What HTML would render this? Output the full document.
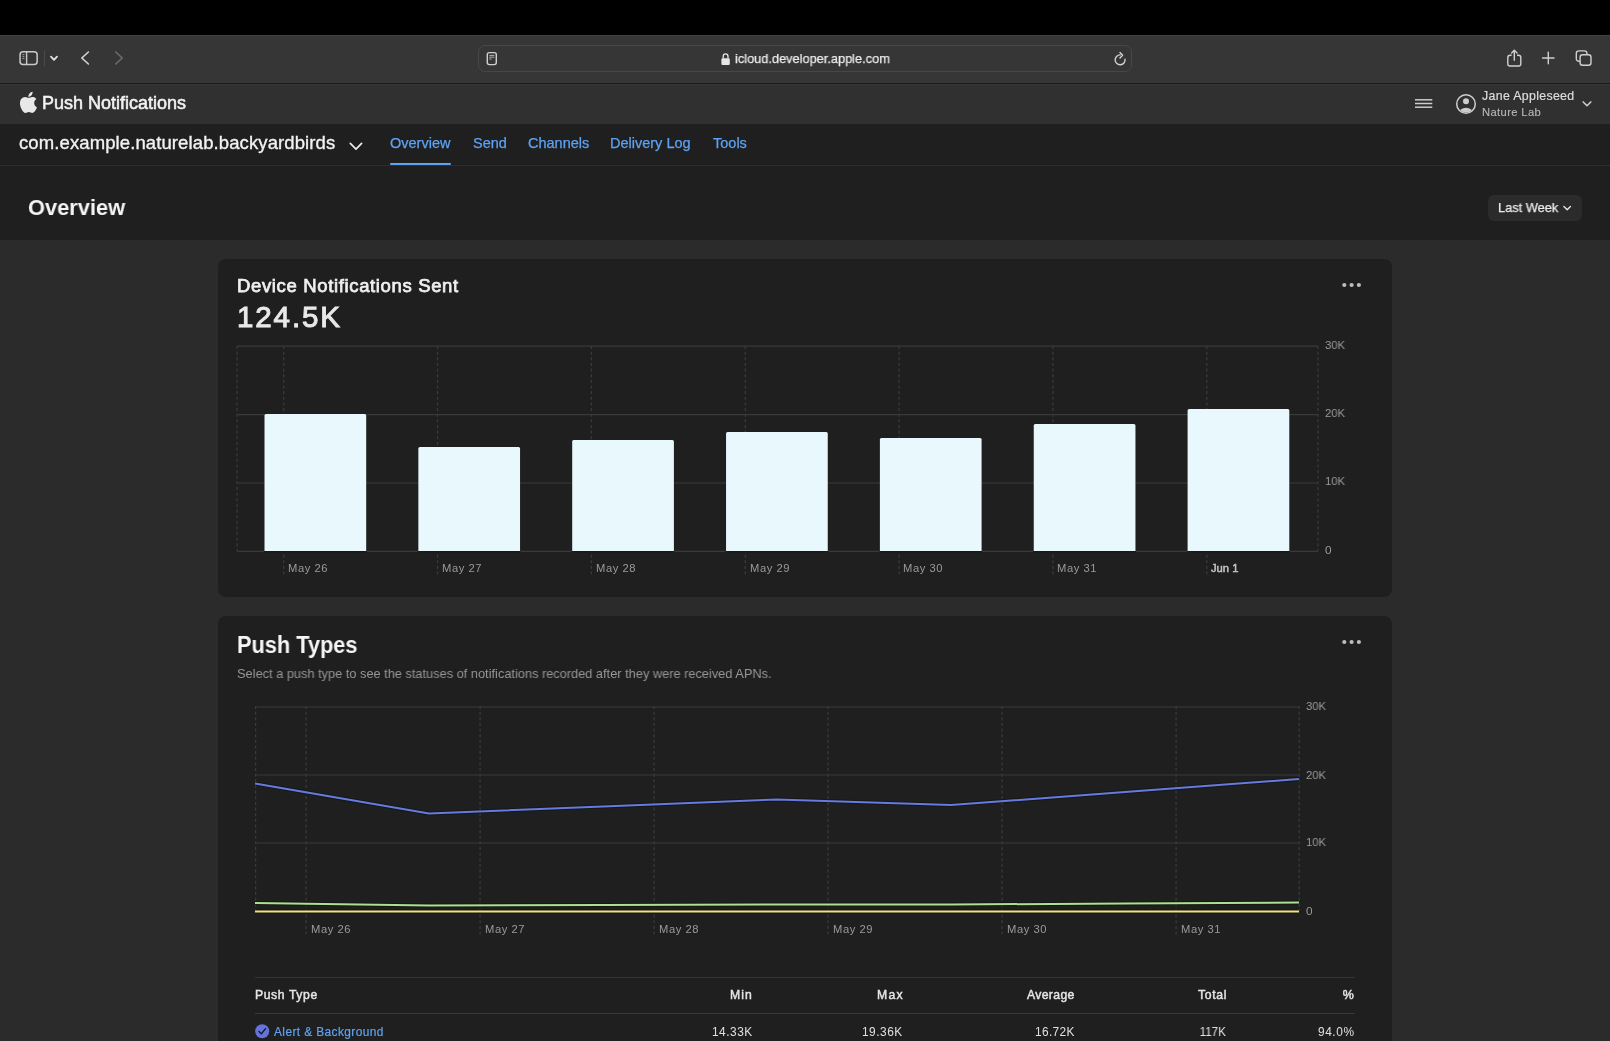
<!DOCTYPE html>
<html><head><meta charset="utf-8">
<style>
*{margin:0;padding:0;box-sizing:border-box}
html,body{width:1610px;height:1041px;overflow:hidden;background:#2b2b2b;font-family:"Liberation Sans",sans-serif;color:#fff}
.abs{position:absolute}
#topbar{left:0;top:0;width:1610px;height:35px;background:#000}
#toolbar{left:0;top:35px;width:1610px;height:49px;background:#363636;border-top:1px solid #424242;border-bottom:1px solid #1a1a1a}
#url{left:478px;top:45px;width:654px;height:27px;border-radius:7px;background:#363636;border:1.5px solid #474747}
#apphdr{left:0;top:84px;width:1610px;height:40px;background:#303030;border-top:1px solid #373737}
#subnav{left:0;top:124px;width:1610px;height:42px;background:#1f1f1f;border-bottom:1px solid #2e2e2e}
#ovhdr{left:0;top:166px;width:1610px;height:74px;background:#1f1f1f}
.card{position:absolute;left:218px;width:1174px;background:#1f1f1f;border-radius:8px}
.t{position:absolute;white-space:nowrap;line-height:1;will-change:transform;transform-origin:left top}
.r{transform-origin:right top}
.b{font-weight:bold}
.tab{color:#5ea2f2}
.ax{color:#9a9a9a}
</style></head><body>
<div id="topbar" class="abs"></div>
<div id="toolbar" class="abs"></div>
<div id="url" class="abs"></div>
<div id="apphdr" class="abs"></div>
<div id="subnav" class="abs"></div>
<div id="ovhdr" class="abs"></div>
<div class="card" style="top:259px;height:338px"></div>
<div class="card" style="top:616px;height:500px"></div>
<div class="abs" style="left:390px;top:163px;width:61px;height:2px;border-radius:1px;background:#5ea2f2"></div>
<div class="abs" style="left:1488px;top:195px;width:94px;height:26px;border-radius:6px;background:#2b2b2b"></div>
<svg class="abs" style="left:0;top:0" width="1610" height="1041" viewBox="0 0 1610 1041">
<line x1="237" y1="346.2" x2="1318" y2="346.2" stroke="#3a3a3a" stroke-width="1.2"/>
<line x1="237" y1="414.6" x2="1318" y2="414.6" stroke="#3a3a3a" stroke-width="1.2"/>
<line x1="237" y1="483.0" x2="1318" y2="483.0" stroke="#3a3a3a" stroke-width="1.2"/>
<line x1="237" y1="551.4" x2="1318" y2="551.4" stroke="#3a3a3a" stroke-width="1.2"/>
<line x1="237.1" y1="346" x2="237.1" y2="551" stroke="#3a3a3a" stroke-dasharray="3 2.64" stroke-width="1.3"/>
<line x1="1318" y1="346" x2="1318" y2="551" stroke="#3a3a3a" stroke-dasharray="3 2.64" stroke-width="1.3"/>
<line x1="283.7" y1="346" x2="283.7" y2="576" stroke="#3a3a3a" stroke-dasharray="3 2.64" stroke-width="1.3"/>
<line x1="437.55" y1="346" x2="437.55" y2="576" stroke="#3a3a3a" stroke-dasharray="3 2.64" stroke-width="1.3"/>
<line x1="591.4" y1="346" x2="591.4" y2="576" stroke="#3a3a3a" stroke-dasharray="3 2.64" stroke-width="1.3"/>
<line x1="745.25" y1="346" x2="745.25" y2="576" stroke="#3a3a3a" stroke-dasharray="3 2.64" stroke-width="1.3"/>
<line x1="899.1" y1="346" x2="899.1" y2="576" stroke="#3a3a3a" stroke-dasharray="3 2.64" stroke-width="1.3"/>
<line x1="1052.95" y1="346" x2="1052.95" y2="576" stroke="#3a3a3a" stroke-dasharray="3 2.64" stroke-width="1.3"/>
<line x1="1206.8" y1="346" x2="1206.8" y2="576" stroke="#3a3a3a" stroke-dasharray="3 2.64" stroke-width="1.3"/>
<rect x="264.0" y="551" width="102.7" height="1.2" fill="#181818"/>
<path d="M264.5 551V415.5Q264.5 414 266.0 414H364.70Q366.20 414 366.20 415.5V551Z" fill="#e9f8fd"/>
<rect x="417.85" y="551" width="102.7" height="1.2" fill="#181818"/>
<path d="M418.35 551V448.5Q418.35 447 419.85 447H518.55Q520.05 447 520.05 448.5V551Z" fill="#e9f8fd"/>
<rect x="571.7" y="551" width="102.7" height="1.2" fill="#181818"/>
<path d="M572.2 551V441.5Q572.2 440 573.7 440H672.40Q673.90 440 673.90 441.5V551Z" fill="#e9f8fd"/>
<rect x="725.55" y="551" width="102.7" height="1.2" fill="#181818"/>
<path d="M726.05 551V433.5Q726.05 432 727.55 432H826.25Q827.75 432 827.75 433.5V551Z" fill="#e9f8fd"/>
<rect x="879.4" y="551" width="102.7" height="1.2" fill="#181818"/>
<path d="M879.9 551V439.5Q879.9 438 881.4 438H980.10Q981.60 438 981.60 439.5V551Z" fill="#e9f8fd"/>
<rect x="1033.25" y="551" width="102.7" height="1.2" fill="#181818"/>
<path d="M1033.75 551V425.5Q1033.75 424 1035.25 424H1133.95Q1135.45 424 1135.45 425.5V551Z" fill="#e9f8fd"/>
<rect x="1187.1" y="551" width="102.7" height="1.2" fill="#181818"/>
<path d="M1187.6 551V410.5Q1187.6 409 1189.1 409H1287.80Q1289.30 409 1289.30 410.5V551Z" fill="#e9f8fd"/>
<line x1="255" y1="707.0" x2="1299" y2="707.0" stroke="#3a3a3a" stroke-width="1.2"/>
<line x1="255" y1="775.0" x2="1299" y2="775.0" stroke="#3a3a3a" stroke-width="1.2"/>
<line x1="255" y1="843.0" x2="1299" y2="843.0" stroke="#3a3a3a" stroke-width="1.2"/>
<line x1="255" y1="911.0" x2="1299" y2="911.0" stroke="#3a3a3a" stroke-width="1.2"/>
<line x1="255.6" y1="706" x2="255.6" y2="911" stroke="#3a3a3a" stroke-dasharray="3 2.64" stroke-width="1.3"/>
<line x1="1299.2" y1="706" x2="1299.2" y2="911" stroke="#3a3a3a" stroke-dasharray="3 2.64" stroke-width="1.3"/>
<line x1="306.1" y1="706" x2="306.1" y2="936" stroke="#3a3a3a" stroke-dasharray="3 2.64" stroke-width="1.3"/>
<line x1="480.1" y1="706" x2="480.1" y2="936" stroke="#3a3a3a" stroke-dasharray="3 2.64" stroke-width="1.3"/>
<line x1="654.1" y1="706" x2="654.1" y2="936" stroke="#3a3a3a" stroke-dasharray="3 2.64" stroke-width="1.3"/>
<line x1="828.1" y1="706" x2="828.1" y2="936" stroke="#3a3a3a" stroke-dasharray="3 2.64" stroke-width="1.3"/>
<line x1="1002.1" y1="706" x2="1002.1" y2="936" stroke="#3a3a3a" stroke-dasharray="3 2.64" stroke-width="1.3"/>
<line x1="1176.1" y1="706" x2="1176.1" y2="936" stroke="#3a3a3a" stroke-dasharray="3 2.64" stroke-width="1.3"/>
<polyline points="255,911.4 429,911.4 603,911.4 777,911.4 951,911.4 1125,911.4 1299,911.4" fill="none" stroke="#111" stroke-width="4" stroke-opacity="0.6" stroke-linejoin="round"/><polyline points="255,911.4 429,911.4 603,911.4 777,911.4 951,911.4 1125,911.4 1299,911.4" fill="none" stroke="#f2e27c" stroke-width="2" stroke-linejoin="round"/>
<polyline points="255,903 429,905.5 603,905 777,904.5 951,904.5 1125,903.5 1299,902.5" fill="none" stroke="#111" stroke-width="4" stroke-opacity="0.6" stroke-linejoin="round"/><polyline points="255,903 429,905.5 603,905 777,904.5 951,904.5 1125,903.5 1299,902.5" fill="none" stroke="#a9e38f" stroke-width="2" stroke-linejoin="round"/>
<polyline points="255,783.5 429,813.5 603,806.5 777,799.5 951,805 1125,792 1299,779" fill="none" stroke="#111" stroke-width="4" stroke-opacity="0.6" stroke-linejoin="round"/><polyline points="255,783.5 429,813.5 603,806.5 777,799.5 951,805 1125,792 1299,779" fill="none" stroke="#667bdf" stroke-width="2" stroke-linejoin="round"/>
<!-- safari icons -->
<rect x="20.05" y="51.65" width="17.1" height="12.8" rx="3" fill="none" stroke="#c9c9c9" stroke-width="1.5"/>
<line x1="26.6" y1="52" x2="26.6" y2="64" stroke="#c9c9c9" stroke-width="1.4"/>
<line x1="22.4" y1="54.6" x2="24.4" y2="54.6" stroke="#9a9a9a" stroke-width="1"/>
<line x1="22.4" y1="56.6" x2="24.4" y2="56.6" stroke="#9a9a9a" stroke-width="1"/>
<line x1="22.4" y1="58.6" x2="24.4" y2="58.6" stroke="#9a9a9a" stroke-width="1"/>
<line x1="44.5" y1="50.5" x2="44.5" y2="66.5" stroke="#4a4a4a" stroke-width="1"/>
<path d="M51 56.6L54 59.8L57 56.6" fill="none" stroke="#e0e0e0" stroke-width="1.8" stroke-linecap="round" stroke-linejoin="round"/>
<path d="M88.4 52L81.8 58L88.4 64" fill="none" stroke="#d6d6d6" stroke-width="1.6" stroke-linecap="round" stroke-linejoin="round"/>
<path d="M115.8 52L122.2 58L115.8 64" fill="none" stroke="#6c6c6c" stroke-width="1.6" stroke-linecap="round" stroke-linejoin="round"/>
<rect x="487.3" y="52.6" width="9" height="12" rx="2" fill="none" stroke="#cfcfcf" stroke-width="1.4"/>
<line x1="489.3" y1="55.4" x2="494.3" y2="55.4" stroke="#bdbdbd" stroke-width="0.9"/>
<line x1="489.3" y1="57.2" x2="494.3" y2="57.2" stroke="#bdbdbd" stroke-width="0.9"/>
<line x1="489.3" y1="59" x2="491.5" y2="59" stroke="#bdbdbd" stroke-width="0.9"/>
<path d="M723.2 58.6V56.4a2.4 2.6 0 0 1 4.8 0V58.6" fill="none" stroke="#e6e6e6" stroke-width="1.3"/>
<rect x="721.4" y="58.3" width="8.4" height="6.6" rx="1.2" fill="#e6e6e6"/>
<path d="M1120.1 54.9A4.95 4.95 0 1 0 1125 59.2" fill="none" stroke="#d2d2d2" stroke-width="1.4" stroke-linecap="round"/>
<path d="M1120 52.5L1122.6 55.2L1120 57.9" fill="none" stroke="#d2d2d2" stroke-width="1.4" stroke-linecap="round" stroke-linejoin="round"/>
<path d="M1511.6 55.2H1510a2.2 2.2 0 0 0 -2.2 2.2V63.8a2.2 2.2 0 0 0 2.2 2.2H1518.6a2.2 2.2 0 0 0 2.2 -2.2V57.4a2.2 2.2 0 0 0 -2.2 -2.2H1517" fill="none" stroke="#cfcfcf" stroke-width="1.4"/>
<line x1="1514.3" y1="50.5" x2="1514.3" y2="60.2" stroke="#cfcfcf" stroke-width="1.4" stroke-linecap="round"/>
<path d="M1511.6 53L1514.3 50.2L1517 53" fill="none" stroke="#cfcfcf" stroke-width="1.4" stroke-linecap="round" stroke-linejoin="round"/>
<line x1="1542.6" y1="58" x2="1554" y2="58" stroke="#cfcfcf" stroke-width="1.4" stroke-linecap="round"/>
<line x1="1548.3" y1="52.3" x2="1548.3" y2="63.7" stroke="#cfcfcf" stroke-width="1.4" stroke-linecap="round"/>
<path d="M1580.1 61.2H1578.8a2.5 2.5 0 0 1 -2.5 -2.5V53.4a2.5 2.5 0 0 1 2.5 -2.5H1584.4a2.5 2.5 0 0 1 2.5 2.5V54.7" fill="none" stroke="#cfcfcf" stroke-width="1.4"/>
<rect x="1580.1" y="54.7" width="10.9" height="10.6" rx="2.5" fill="none" stroke="#cfcfcf" stroke-width="1.4"/>
<!-- apple logo -->
<g transform="translate(20.2 91.8) scale(0.87 0.88) translate(-2.5 0)"><path fill="#e8e8e8" d="M12.152 6.896c-.948 0-2.415-1.078-3.96-1.04-2.040.027-3.910 1.183-4.961 3.014-2.117 3.675-.546 9.103 1.519 12.090 1.013 1.454 2.208 3.090 3.792 3.039 1.520-.065 2.090-.987 3.935-.987 1.831 0 2.350.987 3.960.948 1.637-.026 2.676-1.480 3.676-2.948 1.156-1.688 1.636-3.325 1.662-3.415-.039-.013-3.182-1.221-3.220-4.857-.026-3.040 2.480-4.494 2.597-4.559-1.429-2.090-3.623-2.324-4.390-2.376-2-.156-3.675 1.090-4.610 1.090zM15.530 3.830c.843-1.012 1.400-2.427 1.245-3.830-1.207.052-2.662.805-3.532 1.818-.780.896-1.454 2.338-1.273 3.714 1.338.104 2.715-.688 3.559-1.701"/></g>
<!-- header right -->
<line x1="1415" y1="99.8" x2="1432.3" y2="99.8" stroke="#cdcdcd" stroke-width="1.5"/>
<line x1="1415" y1="103.5" x2="1432.3" y2="103.5" stroke="#cdcdcd" stroke-width="1.5"/>
<line x1="1415" y1="107.2" x2="1432.3" y2="107.2" stroke="#cdcdcd" stroke-width="1.5"/>
<defs><clipPath id="avc"><circle cx="1466" cy="104" r="8.6"/></clipPath></defs>
<circle cx="1466" cy="104" r="9.3" fill="none" stroke="#cdcdcd" stroke-width="1.5"/>
<circle cx="1466" cy="101.2" r="3" fill="#cdcdcd"/>
<ellipse cx="1466" cy="113" rx="7" ry="5.2" fill="#cdcdcd" clip-path="url(#avc)"/>
<path d="M1583.2 101.9L1587 105.8L1590.8 101.9" fill="none" stroke="#d0d0d0" stroke-width="1.5" stroke-linecap="round" stroke-linejoin="round"/>
<!-- subnav chevron -->
<path d="M350.3 143.4L356 149.1L361.6 143.4" fill="none" stroke="#ececec" stroke-width="1.7" stroke-linecap="round" stroke-linejoin="round"/>
<!-- last week chevron -->
<path d="M1563.9 206.6L1567.2 209.8L1570.4 206.6" fill="none" stroke="#e6e6e6" stroke-width="1.4" stroke-linecap="round" stroke-linejoin="round"/>
<!-- more dots -->
<circle cx="1344.3" cy="285" r="2.1" fill="#bdbdbd"/><circle cx="1351.6" cy="285" r="2.1" fill="#bdbdbd"/><circle cx="1358.9" cy="285" r="2.1" fill="#bdbdbd"/>
<circle cx="1344.3" cy="642" r="2.1" fill="#bdbdbd"/><circle cx="1351.6" cy="642" r="2.1" fill="#bdbdbd"/><circle cx="1358.9" cy="642" r="2.1" fill="#bdbdbd"/>
<!-- table -->
<line x1="255" y1="977.5" x2="1355" y2="977.5" stroke="#343434" stroke-width="1"/>
<line x1="255" y1="1013.5" x2="1355" y2="1013.5" stroke="#383838" stroke-width="1"/>
<circle cx="262.2" cy="1031.2" r="7" fill="#6473d9"/>
<path d="M258.9 1031.4L261.3 1033.8L265.6 1028.6" fill="none" stroke="#141414" stroke-width="1.3" stroke-linecap="round" stroke-linejoin="round"/>

</svg>
<span class="t" id="t-url" style="left:735px;top:52.3px;font-size:13.4px;color:#ececec;-webkit-text-stroke-width:0.25px;transform:scaleX(0.954)">icloud.developer.apple.com</span>
<span class="t" id="t-pn" style="left:42px;top:94.0px;font-size:18px;color:#f2f2f2;-webkit-text-stroke-width:0.55px">Push Notifications</span>
<span class="t" id="t-jane" style="left:1482px;top:89.8px;font-size:12.35px;color:#dcdcdc;-webkit-text-stroke-width:0.2px;letter-spacing:0.331px">Jane Appleseed</span>
<span class="t" id="t-nature" style="left:1482px;top:107.0px;font-size:11.2px;color:#b8b8b8;-webkit-text-stroke-width:0.12px;letter-spacing:0.375px">Nature Lab</span>
<span class="t" id="t-bundle" style="left:19px;top:134.4px;font-size:18.5px;color:#f2f2f2;-webkit-text-stroke-width:0.35px;letter-spacing:0.106px">com.example.naturelab.backyardbirds</span>
<span class="t" id="t-tab1" style="left:390px;top:135.7px;font-size:14.5px;color:#5ea2f2;-webkit-text-stroke-width:0.25px">Overview</span>
<span class="t" id="t-tab2" style="left:473px;top:135.7px;font-size:14.5px;color:#5ea2f2;-webkit-text-stroke-width:0.25px">Send</span>
<span class="t" id="t-tab3" style="left:528px;top:135.7px;font-size:14.5px;color:#5ea2f2;-webkit-text-stroke-width:0.25px">Channels</span>
<span class="t" id="t-tab4" style="left:610px;top:135.7px;font-size:14.5px;color:#5ea2f2;-webkit-text-stroke-width:0.25px">Delivery Log</span>
<span class="t" id="t-tab5" style="left:713px;top:135.7px;font-size:14.5px;color:#5ea2f2;-webkit-text-stroke-width:0.25px">Tools</span>
<span class="t b" id="t-ovh" style="left:28px;top:195.9px;font-size:22.8px;color:#f5f5f5;transform:scaleX(0.957)">Overview</span>
<span class="t" id="t-lw" style="left:1498px;top:200.7px;font-size:13.1px;color:#ececec;-webkit-text-stroke-width:0.25px;transform:scaleX(0.978)">Last Week</span>
<span class="t" id="t-dns" style="left:237px;top:276.8px;font-size:18.5px;color:#efefef;-webkit-text-stroke-width:0.75px;letter-spacing:0.647px">Device Notifications Sent</span>
<span class="t" id="t-big" style="left:237px;top:302.4px;font-size:29.5px;color:#e9e9e9;-webkit-text-stroke-width:1.0px;letter-spacing:1.9px">124.5K</span>
<span class="t b" id="t-pt" style="left:237px;top:633.9px;font-size:23.7px;color:#f5f5f5;transform:scaleX(0.918)">Push Types</span>
<span class="t" id="t-sub" style="left:237px;top:667.9px;font-size:12.9px;color:#979797;transform:scaleX(0.992)">Select a push type to see the statuses of notifications recorded after they were received APNs.</span>
<span class="t" id="t-x10" style="left:288.0px;top:562.5px;font-size:11.2px;color:#9a9a9a;letter-spacing:0.563px">May 26</span>
<span class="t" id="t-x11" style="left:441.85px;top:562.5px;font-size:11.2px;color:#9a9a9a;letter-spacing:0.563px">May 27</span>
<span class="t" id="t-x12" style="left:595.7px;top:562.5px;font-size:11.2px;color:#9a9a9a;letter-spacing:0.563px">May 28</span>
<span class="t" id="t-x13" style="left:749.55px;top:562.5px;font-size:11.2px;color:#9a9a9a;letter-spacing:0.563px">May 29</span>
<span class="t" id="t-x14" style="left:903.4px;top:562.5px;font-size:11.2px;color:#9a9a9a;letter-spacing:0.563px">May 30</span>
<span class="t" id="t-x15" style="left:1057.25px;top:562.5px;font-size:11.2px;color:#9a9a9a;letter-spacing:0.563px">May 31</span>
<span class="t" id="t-x16" style="left:1211.1px;top:562.5px;font-size:11.2px;color:#c4c4c4;-webkit-text-stroke-width:0.5px">Jun 1</span>
<span class="t" id="t-y130K" style="left:1325px;top:340.0px;font-size:11.8px;color:#9a9a9a;transform:scaleX(0.96)">30K</span>
<span class="t" id="t-y120K" style="left:1325px;top:408.4px;font-size:11.8px;color:#9a9a9a;transform:scaleX(0.96)">20K</span>
<span class="t" id="t-y110K" style="left:1325px;top:476.4px;font-size:11.8px;color:#9a9a9a;transform:scaleX(0.96)">10K</span>
<span class="t" id="t-y10" style="left:1325px;top:545.4px;font-size:11.8px;color:#9a9a9a;transform:scaleX(0.96)">0</span>
<span class="t" id="t-x20" style="left:311px;top:923.5px;font-size:11.2px;color:#9a9a9a;letter-spacing:0.563px">May 26</span>
<span class="t" id="t-x21" style="left:485px;top:923.5px;font-size:11.2px;color:#9a9a9a;letter-spacing:0.563px">May 27</span>
<span class="t" id="t-x22" style="left:659px;top:923.5px;font-size:11.2px;color:#9a9a9a;letter-spacing:0.563px">May 28</span>
<span class="t" id="t-x23" style="left:833px;top:923.5px;font-size:11.2px;color:#9a9a9a;letter-spacing:0.563px">May 29</span>
<span class="t" id="t-x24" style="left:1007px;top:923.5px;font-size:11.2px;color:#9a9a9a;letter-spacing:0.563px">May 30</span>
<span class="t" id="t-x25" style="left:1181px;top:923.5px;font-size:11.2px;color:#9a9a9a;letter-spacing:0.563px">May 31</span>
<span class="t" id="t-y230K" style="left:1306px;top:700.9px;font-size:11.8px;color:#9a9a9a;transform:scaleX(0.96)">30K</span>
<span class="t" id="t-y220K" style="left:1306px;top:769.6px;font-size:11.8px;color:#9a9a9a;transform:scaleX(0.96)">20K</span>
<span class="t" id="t-y210K" style="left:1306px;top:837.4px;font-size:11.8px;color:#9a9a9a;transform:scaleX(0.96)">10K</span>
<span class="t" id="t-y20" style="left:1306px;top:905.6px;font-size:11.8px;color:#9a9a9a;transform:scaleX(0.96)">0</span>
<span class="t" id="t-th0" style="left:255px;top:988.6px;font-size:12.2px;color:#e6e6e6;-webkit-text-stroke-width:0.45px;letter-spacing:0.604px">Push Type</span>
<span class="t r" id="t-th1" style="right:856.959px;top:988.6px;font-size:12.2px;color:#e6e6e6;-webkit-text-stroke-width:0.45px;letter-spacing:1.041px">Min</span>
<span class="t r" id="t-td1" style="right:857.49px;top:1027.1px;font-size:11.9px;color:#e0e0e0;letter-spacing:0.51px">14.33K</span>
<span class="t r" id="t-th2" style="right:706.761px;top:988.6px;font-size:12.2px;color:#e6e6e6;-webkit-text-stroke-width:0.45px;letter-spacing:1.239px">Max</span>
<span class="t r" id="t-td2" style="right:707.49px;top:1027.1px;font-size:11.9px;color:#e0e0e0;letter-spacing:0.51px">19.36K</span>
<span class="t r" id="t-th3" style="right:535.648px;top:988.6px;font-size:12.2px;color:#e6e6e6;-webkit-text-stroke-width:0.45px;letter-spacing:0.352px">Average</span>
<span class="t r" id="t-td3" style="right:535.664px;top:1027.1px;font-size:11.9px;color:#e0e0e0;letter-spacing:0.336px">16.72K</span>
<span class="t r" id="t-th4" style="right:383.318px;top:988.6px;font-size:12.2px;color:#e6e6e6;-webkit-text-stroke-width:0.45px;letter-spacing:0.682px">Total</span>
<span class="t r" id="t-td4" style="right:384px;top:1027.1px;font-size:11.9px;color:#e0e0e0;transform:scaleX(0.977)">117K</span>
<span class="t r" id="t-th5" style="right:256px;top:988.6px;font-size:12.2px;color:#e6e6e6;-webkit-text-stroke-width:0.45px;transform:scaleX(1.02)">%</span>
<span class="t r" id="t-td5" style="right:255.435px;top:1027.1px;font-size:11.9px;color:#e0e0e0;letter-spacing:0.565px">94.0%</span>
<span class="t" id="t-td0" style="left:274px;top:1027.1px;font-size:11.9px;color:#5ea2f2;-webkit-text-stroke-width:0.2px;letter-spacing:0.403px">Alert &amp; Background</span>
</body></html>
